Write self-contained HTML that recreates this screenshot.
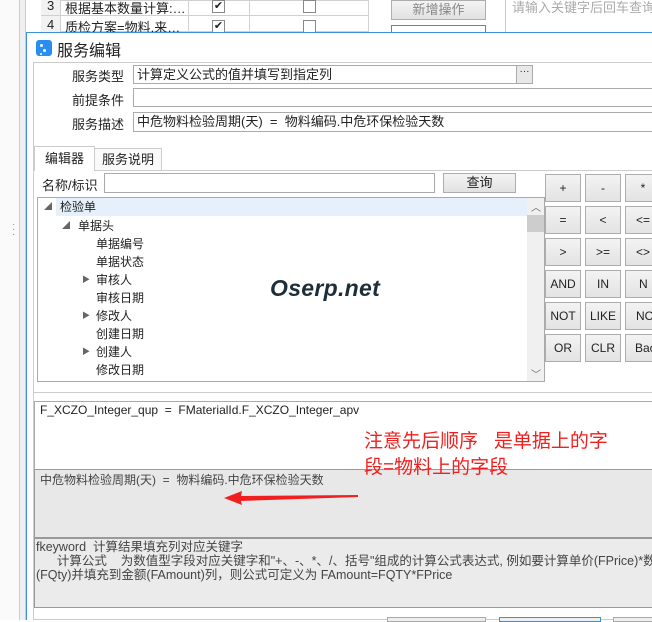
<!DOCTYPE html>
<html><head><meta charset="utf-8">
<style>
*{margin:0;padding:0;box-sizing:border-box}
body{width:652px;height:620px;overflow:hidden;background:#fff;position:relative;font-family:"Liberation Sans","Noto Sans CJK SC",sans-serif;font-size:12px;color:#222}
.a{position:absolute;white-space:nowrap}
.btn{position:absolute;background:linear-gradient(#f4f4f4,#e2e2e2);border:1px solid #adadad;text-align:center;color:#222}
.cb{position:absolute;width:13px;height:13px;border:1px solid #888;background:#fff;font-size:11px;line-height:11px;text-align:center}
.lbl{position:absolute;width:90px;left:34px;text-align:right;font-size:13px}
.in{position:absolute;border:1px solid #aaa;background:#fff;font-size:13px;padding-left:3px;line-height:17px;white-space:nowrap}
.tr{position:absolute;font-size:12px;line-height:18px}
.calc{position:absolute;width:36px;height:28px;border:1px solid #adadad;background:linear-gradient(#f3f3f3,#e3e3e3);text-align:center;line-height:26px;font-size:12px;color:#222;overflow:hidden;white-space:nowrap}
</style></head><body>
<div class="a" style="left:0;top:0;width:20px;height:620px;border-right:1px solid #ccc;background:#fafafa"></div>
<div class="a" style="left:20px;top:0;width:6px;height:620px;border-right:1px solid #ccc;background:#f0f0f0"></div>
<div class="a" style="left:12px;top:222px;color:#888;font-size:10px;line-height:5px">·<br>·<br>·</div>
<div class="a" style="left:41px;top:0;width:328px;height:32px;border:1px solid #d0d0d0;background:#fff"></div>
<div class="a" style="left:41px;top:0;width:20px;height:32px;background:#f2f2f2;border-right:1px solid #d0d0d0"></div>
<div class="a" style="left:41px;top:15px;width:328px;border-top:1px solid #d0d0d0"></div>
<div class="a" style="left:188px;top:0;height:32px;border-left:1px solid #d0d0d0"></div>
<div class="a" style="left:249px;top:0;height:32px;border-left:1px solid #d0d0d0"></div>
<div class="a" style="left:47px;top:-2px;font-size:13px">3</div>
<div class="a" style="left:47px;top:17px;font-size:13px">4</div>
<div class="a" style="left:65px;top:-2px;font-size:13px">根据基本数量计算:…</div>
<div class="a" style="left:65px;top:17px;font-size:13px">质检方案=物料.来…</div>
<div class="cb" style="left:212px;top:0">✔</div><div class="cb" style="left:212px;top:20px">✔</div>
<div class="cb" style="left:303px;top:0"></div><div class="cb" style="left:303px;top:20px"></div>
<div class="btn" style="left:391px;top:0;width:95px;height:20px;line-height:18px;color:#888;font-size:13px">新增操作</div>
<div class="a" style="left:391px;top:25px;width:95px;height:10px;border:1px solid #3c8fdd"></div>
<div class="a" style="left:505px;top:0;width:147px;height:32px;border-left:1px solid #ccc"></div>
<div class="a" style="left:512px;top:-3px;color:#aaa;font-size:13px">请输入关键字后回车查询</div>
<div class="a" style="left:26px;top:32px;width:626px;height:588px;background:#fff;border:1px solid #3c8fdd;border-right:none;border-bottom:none"></div>
<div class="a" style="left:36px;top:40px;width:16px;height:16px;background:#2a8ef0;border-radius:3px"></div>
<div class="a" style="left:40px;top:44px;width:3px;height:3px;background:#fff;border-radius:50%"></div>
<div class="a" style="left:43px;top:49px;width:3px;height:3px;background:#fff;border-radius:50%"></div>
<div class="a" style="left:40px;top:53px;width:2px;height:2px;background:#fff;border-radius:50%"></div>
<div class="a" style="left:57px;top:37px;font-size:16px">服务编辑</div>
<div class="a" style="left:33px;top:62px;width:619px;height:558px;border:1px solid #ccc;border-right:none;background:#fff"></div>
<div class="lbl" style="top:66px">服务类型</div>
<div class="lbl" style="top:90px">前提条件</div>
<div class="lbl" style="top:114px">服务描述</div>
<div class="in" style="left:133px;top:65px;width:400px;height:19px">计算定义公式的值并填写到指定列</div>
<div class="a" style="left:516px;top:66px;width:16px;height:17px;background:#e8e8e8;border-left:1px solid #aaa;text-align:center;font-size:10px;line-height:12px">···</div>
<div class="in" style="left:133px;top:88px;width:530px;height:19px"></div>
<div class="in" style="left:133px;top:112px;width:530px;height:20px">中危物料检验周期(天)&nbsp;&nbsp;=&nbsp;&nbsp;物料编码.中危环保检验天数</div>
<div class="a" style="left:34px;top:170px;width:618px;border-top:1px solid #ccc"></div>
<div class="a" style="left:34px;top:146px;width:61px;height:25px;border:1px solid #ccc;border-bottom:none;background:#fff;text-align:center;line-height:24px;font-size:13px">编辑器</div>
<div class="a" style="left:94px;top:148px;width:68px;height:22px;border:1px solid #ccc;border-bottom:none;background:#fafafa;text-align:center;line-height:22px;font-size:13px">服务说明</div>
<div class="a" style="left:42px;top:175px;font-size:13px">名称/标识</div>
<div class="in" style="left:104px;top:173px;width:331px;height:20px"></div>
<div class="btn" style="left:443px;top:173px;width:73px;height:20px;line-height:18px;font-size:13px">查询</div>
<div class="a" style="left:37px;top:197px;width:508px;height:185px;border:1px solid #aaa;background:#fff"></div>
<div class="a" style="left:56px;top:198px;width:471px;height:18px;background:#e5f0fa"></div>
<div class="a" style="left:527px;top:198px;width:17px;height:183px;background:#f0f0f0"></div>
<div class="a" style="left:527px;top:215px;width:17px;height:17px;background:#cdcdcd"></div>
<div class="a" style="left:531px;top:199px;font-size:10px;color:#666">︿</div>
<div class="a" style="left:531px;top:366px;font-size:10px;color:#666">﹀</div>
<div class="tr" style="left:44px;top:198px;font-size:8px;color:#666">◢</div>
<div class="tr" style="left:60px;top:198px">检验单</div>
<div class="tr" style="left:62px;top:217px;font-size:8px;color:#666">◢</div>
<div class="tr" style="left:78px;top:217px">单据头</div>
<div class="tr" style="left:96px;top:235px">单据编号</div>
<div class="tr" style="left:96px;top:253px">单据状态</div>
<div class="tr" style="left:82px;top:271px;font-size:8px;color:#666">▶</div>
<div class="tr" style="left:96px;top:271px">审核人</div>
<div class="tr" style="left:96px;top:289px">审核日期</div>
<div class="tr" style="left:82px;top:307px;font-size:8px;color:#666">▶</div>
<div class="tr" style="left:96px;top:307px">修改人</div>
<div class="tr" style="left:96px;top:325px">创建日期</div>
<div class="tr" style="left:82px;top:343px;font-size:8px;color:#666">▶</div>
<div class="tr" style="left:96px;top:343px">创建人</div>
<div class="tr" style="left:96px;top:361px">修改日期</div>
<div class="a" style="left:270px;top:275px;font-size:23px;font-weight:bold;font-style:italic;color:#1e2e38;font-family:'Liberation Sans',sans-serif;letter-spacing:0.3px">Oserp.net</div>
<div class="calc" style="left:545px;top:174px">+</div><div class="calc" style="left:585px;top:174px">-</div><div class="calc" style="left:625px;top:174px">*</div>
<div class="calc" style="left:545px;top:206px">=</div><div class="calc" style="left:585px;top:206px">&lt;</div><div class="calc" style="left:625px;top:206px">&lt;=</div>
<div class="calc" style="left:545px;top:238px">&gt;</div><div class="calc" style="left:585px;top:238px">&gt;=</div><div class="calc" style="left:625px;top:238px">&lt;&gt;</div>
<div class="calc" style="left:545px;top:270px">AND</div><div class="calc" style="left:585px;top:270px">IN</div><div class="calc" style="left:625px;top:270px;text-align:left;padding-left:13px">N</div>
<div class="calc" style="left:545px;top:302px">NOT</div><div class="calc" style="left:585px;top:302px">LIKE</div><div class="calc" style="left:625px;top:302px;text-align:left;padding-left:10px">NO</div>
<div class="calc" style="left:545px;top:334px">OR</div><div class="calc" style="left:585px;top:334px">CLR</div><div class="calc" style="left:625px;top:334px;text-align:left;padding-left:9px">Back</div>
<div class="a" style="left:34px;top:392px;width:618px;border-top:1px solid #ccc"></div>
<div class="a" style="left:34px;top:401px;width:618px;height:69px;border:1px solid #aaa;border-right:none;background:#fff"></div>
<div class="a" style="left:40px;top:403px;font-size:12px">F_XCZO_Integer_qup&nbsp;&nbsp;=&nbsp;&nbsp;FMaterialId.F_XCZO_Integer_apv</div>
<div class="a" style="left:34px;top:469px;width:618px;height:69px;border:1px solid #999;border-right:none;background:#e8e8e8"></div>
<div class="a" style="left:40px;top:471px;font-size:12px;color:#444">中危物料检验周期(天)&nbsp;&nbsp;=&nbsp;&nbsp;物料编码.中危环保检验天数</div>
<div class="a" style="left:364px;top:429px;font-size:19px;color:#f02020;line-height:26px">注意先后顺序&nbsp;&nbsp;&nbsp;是单据上的字<br>段=物料上的字段</div>
<svg class="a" style="left:220px;top:490px" width="140" height="16"><polygon points="4,8 22,1 21,6 138,5 138,7 21,11 22,15" fill="#f02020"/></svg>
<div class="a" style="left:34px;top:538px;width:618px;height:70px;border:1px solid #999;border-right:none;background:#ebebeb"></div>
<div class="a" style="left:36px;top:540px;font-size:12.5px;color:#444;line-height:14px;white-space:nowrap">fkeyword&nbsp; 计算结果填充列对应关键字<br>&nbsp;&nbsp;&nbsp;&nbsp;&nbsp;&nbsp;计算公式&nbsp;&nbsp;&nbsp;&nbsp;为数值型字段对应关键字和"+、-、*、/、括号"组成的计算公式表达式, 例如要计算单价(FPrice)*数量<br>(FQty)并填充到金额(FAmount)列，则公式可定义为 FAmount=FQTY*FPrice</div>
<div class="a" style="left:387px;top:617px;width:99px;height:5px;border:1px solid #aaa;background:#eee"></div>
<div class="a" style="left:499px;top:617px;width:102px;height:5px;border:1px solid #3c8fdd;background:#eee"></div>
<div class="a" style="left:613px;top:617px;width:40px;height:5px;border:1px solid #aaa;background:#eee"></div>
</body></html>
